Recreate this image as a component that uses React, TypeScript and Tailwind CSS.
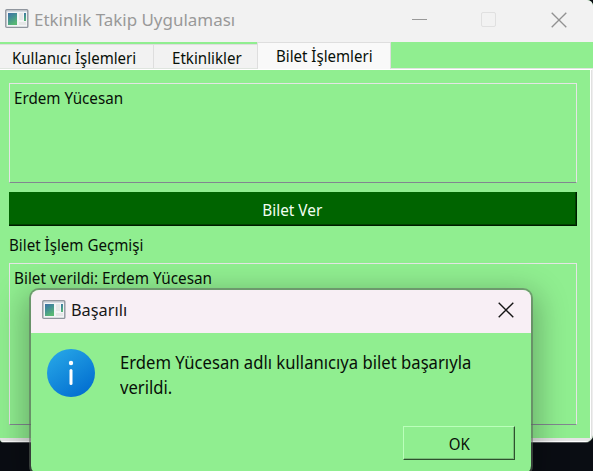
import React from "react";

function AppIcon() {
  return (
    <svg width="24" height="20" viewBox="0 0 24 20" className="block shrink-0">
      <defs>
        <linearGradient id="pane" x1="0" y1="0" x2="0.5" y2="1">
          <stop offset="0" stopColor="#3f6fa6" />
          <stop offset="0.45" stopColor="#438f95" />
          <stop offset="1" stopColor="#58b874" />
        </linearGradient>
      </defs>
      <rect x="0.8" y="0.8" width="22" height="17.6" rx="1" fill="#f3f5f6" stroke="#90969e" strokeWidth="1.4" />
      <path d="M2 2.5h20" stroke="#d3dae2" />
      <rect x="3" y="4" width="9" height="12" fill="url(#pane)" />
      <path d="M14 4h4v7h-4zM14 13h7v3h-7z" fill="#e5e7e7" />
      <rect x="19" y="4" width="2" height="8" fill="url(#pane)" />
    </svg>
  );
}

function Cross({ color }: { color: string }) {
  return (
    <svg width="16" height="16" viewBox="0 0 16 16" className="block" fill="none" stroke={color} strokeWidth="1.35">
      <path d="M0.7 0.7l14.6 14.6M15.3 0.7L0.7 15.3" />
    </svg>
  );
}

function Label({ text, className }: { text: string; className: string }) {
  return <span className={`block whitespace-nowrap ${className}`}>{text}</span>;
}

export default function App() {
  return (
    <div className="relative h-[471px] w-[593px] overflow-hidden bg-[#0a0d13] font-['Noto_Sans',sans-serif] text-[16px] leading-5 text-[#081008]">
      <div className="flex h-[443px] w-[593px] flex-col overflow-hidden rounded-tr-md rounded-br-lg rounded-bl-[4px] border-b border-[#55585b] bg-[#90ee90]">
        <header className="flex h-[42px] shrink-0 items-start bg-[#f2f2f2] text-[#999999]">
          <div className="pt-[9px] pl-[5px]"><AppIcon /></div>
          <Label text="Etkinlik Takip Uygulaması" className="mt-[9px] ml-[5px] w-[202px] origin-left scale-x-[0.997] text-[17px] leading-[22px]" />
          <div className="mt-[19px] ml-[176px] h-px w-[15px] bg-[#999999]" />
          <div className="mt-3 ml-[54px] size-[15px] rounded-[2px] border-[1.5px] border-[#e0e0e0]" />
          <div className="mt-3 ml-[55px]"><Cross color="#929292" /></div>
        </header>

        <nav className="flex h-[27px] shrink-0 items-start border-b border-[#dfe5df]">
          <div className="mt-[2px] h-6 w-[154px] border-t border-r border-[#dedede] bg-[#f2f2f2] pt-[3px] pl-3">
            <Label text="Kullanıcı İşlemleri" className="origin-left scale-x-[0.94]" />
          </div>
          <div className="mt-[2px] h-6 w-[103px] border-t border-[#dedede] bg-[#f2f2f2] pt-[3px] pl-[18px]">
            <Label text="Etkinlikler" className="origin-left scale-x-[0.945]" />
          </div>
          <div className="h-[27px] w-[134px] border border-b-0 border-[#dedede] bg-[#f9f9f9] pt-[3px] pl-[18px]">
            <Label text="Bilet İşlemleri" className="origin-left scale-x-[0.94]" />
          </div>
        </nav>

        <main className="flex h-[369px] shrink-0 flex-col border-t border-r border-t-white border-r-[#eeeeee] pt-[13px] pr-[15px] pl-[9px] shadow-[inset_-1px_0_0_#e1e1e1,inset_-2px_0_0_#ffffff]">
          <div className="h-[100px] shrink-0 border border-[#e5e5e5] border-b-[#828790] pt-[4px] pl-1">
            <Label text="Erdem Yücesan" className="origin-left scale-x-[0.95]" />
          </div>
          <button className="mt-[9px] flex h-[34px] shrink-0 items-center justify-center border-r border-b border-[#001b00] bg-[#006400] pt-[3px] text-[#f2fff2] shadow-[inset_-1px_-1px_0_#004000]">
            <Label text="Bilet Ver" className="scale-x-[0.96]" />
          </button>
          <div className="flex h-[37px] shrink-0 items-center pt-[1px]">
            <Label text="Bilet İşlem Geçmişi" className="origin-left scale-x-[0.945]" />
          </div>
          <div className="h-[162px] shrink-0 border border-[#e5e5e5] border-b-[#828790] pt-[4px] pl-1">
            <Label text="Bilet verildi: Erdem Yücesan" className="origin-left scale-x-[0.957]" />
          </div>
        </main>
        <div className="h-1 shrink-0 border-b border-white bg-[#e4e4e4]" />
      </div>

      <section className="absolute top-[290px] left-[31px] flex h-[184px] w-[500px] flex-col rounded-lg shadow-[0_0_0_2px_rgba(92,103,92,0.55),0_10px_30px_8px_rgba(0,0,0,0.26)]">
        <header className="flex h-[43px] shrink-0 items-start rounded-t-lg bg-[#f8eff5] pl-[11px]">
          <div className="mt-[10px]"><AppIcon /></div>
          <Label text="Başarılı" className="mt-[10px] ml-[5px] w-[60px] origin-left scale-x-[0.96] text-[17px] text-[#171717]" />
          <div className="mt-3 ml-[367px]"><Cross color="#151515" /></div>
        </header>
        <div className="flex flex-1 flex-col rounded-b-lg bg-[#90ee90]">
          <div className="flex h-[93px] items-start pt-4 pl-4">
            <svg width="48" height="48" viewBox="0 0 48 48" className="shrink-0">
              <defs>
                <linearGradient id="info" x1="0.15" y1="0" x2="0.85" y2="1">
                  <stop offset="0" stopColor="#27a7e7" />
                  <stop offset="1" stopColor="#006bcf" />
                </linearGradient>
              </defs>
              <circle cx="24" cy="24" r="24" fill="url(#info)" />
              <circle cx="24" cy="14" r="2.2" fill="white" />
              <path d="M24 21.5v13" stroke="white" strokeWidth="3" strokeLinecap="round" />
            </svg>
            <div className="mt-[1px] ml-[25px] origin-left scale-x-[0.925] text-[18px] leading-[25px]">
              <Label text="Erdem Yücesan adlı kullanıcıya bilet başarıyla" className="" />
              <Label text="verildi." className="" />
            </div>
          </div>
          <button className="ml-[372px] flex h-[34px] w-[112px] items-center justify-center border border-t-[#baffba] border-r-[#2d512d] border-b-[#2d512d] border-l-[#baffba] pt-[2px] shadow-[inset_-1px_-1px_0_#79bd79]">
            <Label text="OK" className="scale-x-[0.94]" />
          </button>
        </div>
      </section>
    </div>
  );
}
